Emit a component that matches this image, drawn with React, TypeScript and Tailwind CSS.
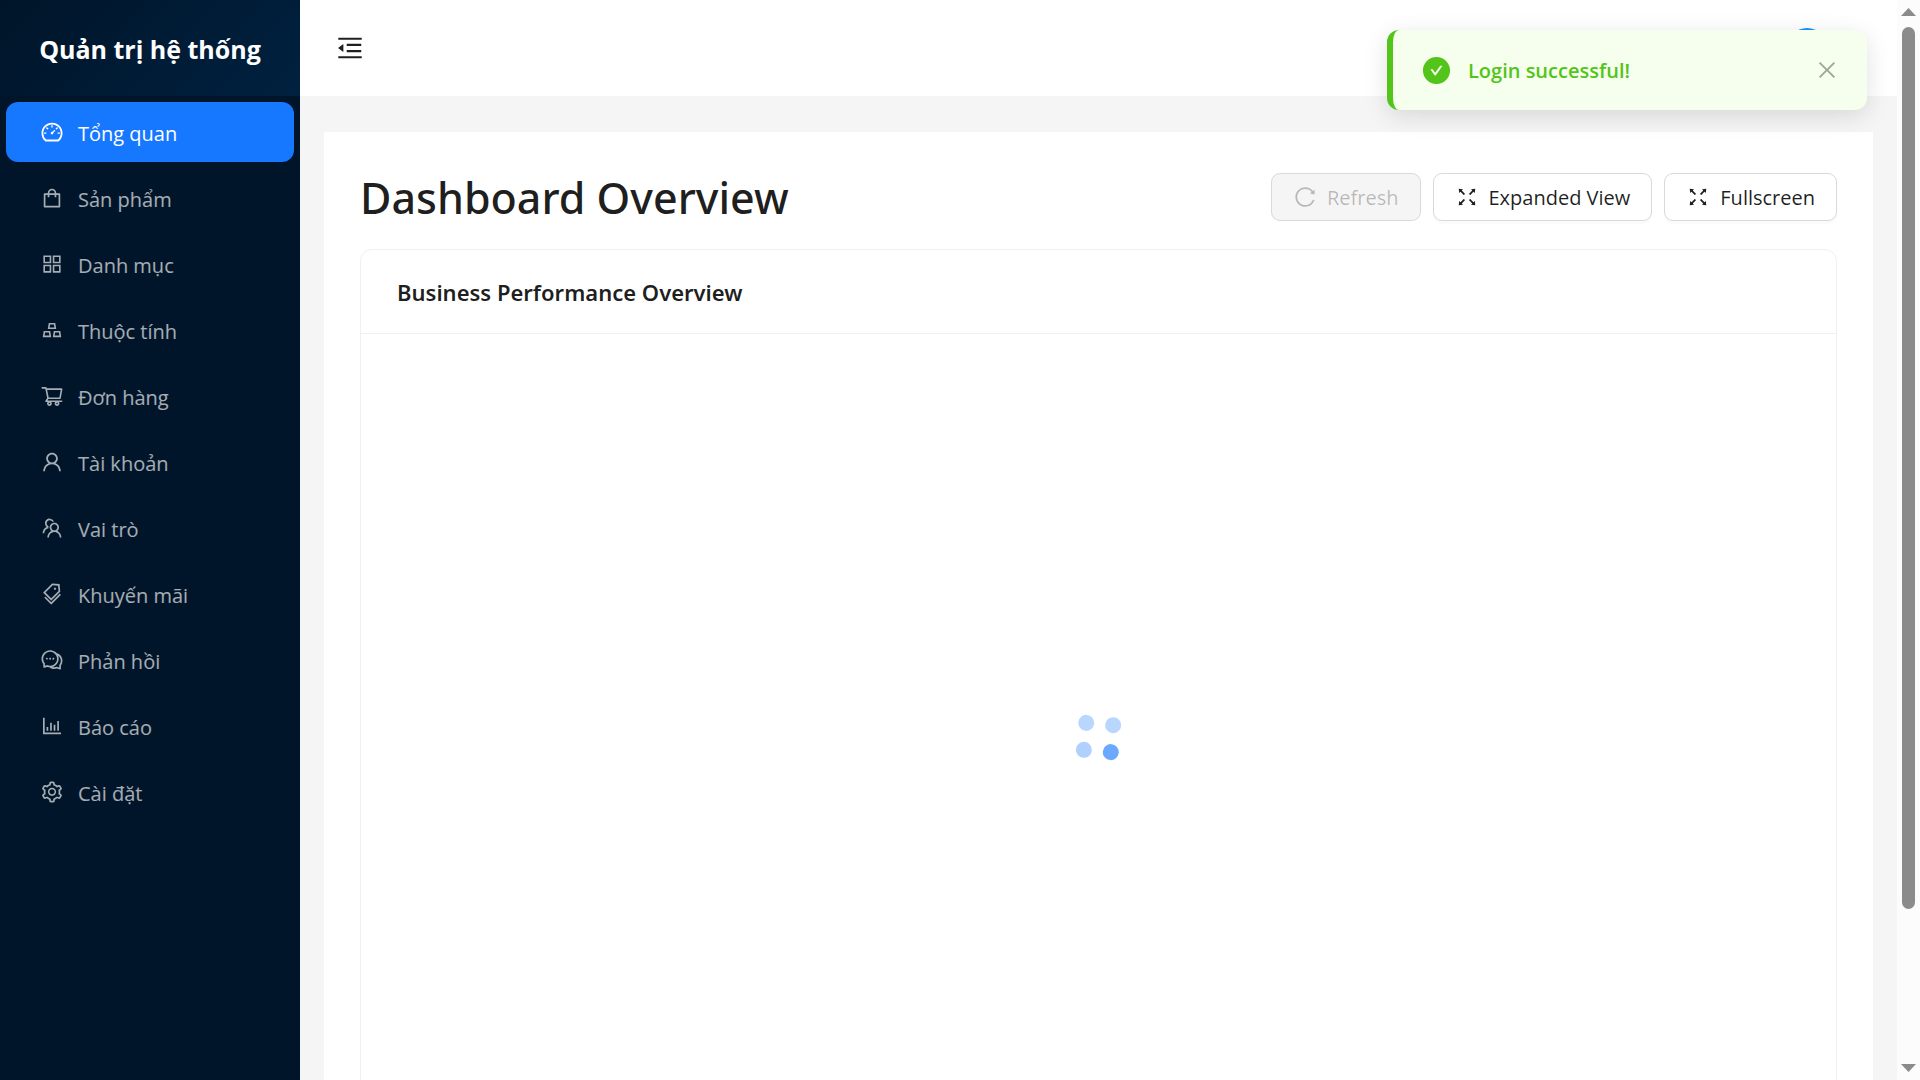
import {
  AiFillCheckCircle,
  AiOutlineAppstore,
  AiOutlineBarChart,
  AiOutlineClose,
  AiOutlineComment,
  AiOutlineDashboard,
  AiOutlineFullscreen,
  AiOutlineGold,
  AiOutlineMenuFold,
  AiOutlineReload,
  AiOutlineSetting,
  AiOutlineShopping,
  AiOutlineShoppingCart,
  AiOutlineTags,
  AiOutlineTeam,
  AiOutlineUser,
} from 'react-icons/ai';
import type { IconType } from 'react-icons';

const menu: { label: string; icon: IconType; active?: boolean }[] = [
  { label: 'Tổng quan', icon: AiOutlineDashboard, active: true },
  { label: 'Sản phẩm', icon: AiOutlineShopping },
  { label: 'Danh mục', icon: AiOutlineAppstore },
  { label: 'Thuộc tính', icon: AiOutlineGold },
  { label: 'Đơn hàng', icon: AiOutlineShoppingCart },
  { label: 'Tài khoản', icon: AiOutlineUser },
  { label: 'Vai trò', icon: AiOutlineTeam },
  { label: 'Khuyến mãi', icon: AiOutlineTags },
  { label: 'Phản hồi', icon: AiOutlineComment },
  { label: 'Báo cáo', icon: AiOutlineBarChart },
  { label: 'Cài đặt', icon: AiOutlineSetting },
];

function Sidebar() {
  return (
    <aside className="flex w-[300px] shrink-0 flex-col bg-[#001529]">
      <div className="flex h-24 items-center justify-center bg-linear-135 from-[#001529] to-[#002140] pt-1 text-[25px] font-bold text-white">
        Quản trị hệ thống
      </div>
      <nav className="flex flex-col gap-1.5 p-1.5" aria-label="Menu">
        {menu.map(({ label, icon: Icon, active }) => (
          <a
            key={label}
            href="#"
            aria-current={active ? 'page' : undefined}
            className={`flex h-15 items-center gap-3.5 rounded-xl px-[34px] text-[20px] ${
              active ? 'bg-[#1677ff] text-white' : 'text-white/65'
            }`}
          >
            <Icon size={24} className="shrink-0" />
            <span className="pt-1">{label}</span>
          </a>
        ))}
      </nav>
    </aside>
  );
}

function ActionButton({ label, icon: Icon, disabled }: { label: string; icon: IconType; disabled?: boolean }) {
  return (
    <button
      type="button"
      disabled={disabled}
      className="flex h-12 items-center gap-2.5 rounded-[9px] border border-[#d9d9d9] bg-white px-[21px] text-[20px] text-black/88 shadow-[0_3px_0_rgba(0,0,0,0.02)] disabled:bg-[#f5f5f5] disabled:text-black/25 disabled:shadow-none"
    >
      <Icon size={24} />
      <span className="pt-0.5">{label}</span>
    </button>
  );
}

function Spinner() {
  return (
    <div role="status" aria-label="Loading" className="grid rotate-5 grid-cols-2 gap-[11px]">
      <span className="size-4 rounded-full bg-[#b9d6ff]" />
      <span className="size-4 rounded-full bg-[#b9d6ff]" />
      <span className="size-4 rounded-full bg-[#b0d0ff]" />
      <span className="size-4 rounded-full bg-[#6ba8ff]" />
    </div>
  );
}

function Toast() {
  return (
    <div
      role="alert"
      className="absolute top-[30px] right-[53px] flex h-20 w-[480px] items-center rounded-xl border-l-6 border-[#52c41a] bg-[#f6ffed] pr-7 pl-7 shadow-[0_6px_24px_rgba(0,0,0,0.12)]"
    >
      <AiFillCheckCircle size={31} className="text-[#52c41a]" />
      <span className="flex-1 pt-0.5 pl-4 text-[20px] font-semibold text-[#52c41a]">Login successful!</span>
      <button type="button" aria-label="Close" className="text-black/35">
        <AiOutlineClose size={24} />
      </button>
    </div>
  );
}

function Scrollbar() {
  return (
    <div aria-hidden="true" className="flex w-[23px] shrink-0 flex-col items-center bg-[#fcfcfc] py-2 text-[#8b8b8b]">
      <svg width="15" height="8" viewBox="0 0 15 8" fill="currentColor">
        <path d="M7.5 0 15 8H0z" />
      </svg>
      <div className="my-[11px] w-full flex-1 px-[5px]">
        <div className="h-[86%] rounded-full bg-[#8b8b8b]" />
      </div>
      <svg width="15" height="8" viewBox="0 0 15 8" fill="currentColor">
        <path d="M7.5 8 15 0H0z" />
      </svg>
    </div>
  );
}

export default function App() {
  return (
    <div className="relative flex h-screen overflow-hidden bg-[#f5f5f5] font-['Open_Sans','Noto_Sans',sans-serif] text-black/88">
      <Sidebar />
      <div className="flex min-w-0 flex-1 flex-col">
        <header className="flex h-24 shrink-0 items-center justify-between bg-white pr-[70px] pl-[35px]">
          <button type="button" aria-label="Collapse menu">
            <AiOutlineMenuFold size={30} />
          </button>
          <div className="size-10 rounded-full bg-[#1890ff]" />
        </header>
        <main className="mx-6 mt-9 flex-1 overflow-hidden bg-white px-9 pt-9">
          <div className="flex items-center justify-between">
            <h1 className="pt-[3px] font-['Noto_Sans',sans-serif] text-[43px] leading-[54px] font-medium">
              Dashboard Overview
            </h1>
            <div className="flex gap-3">
              <ActionButton label="Refresh" icon={AiOutlineReload} disabled />
              <ActionButton label="Expanded View" icon={AiOutlineFullscreen} />
              <ActionButton label="Fullscreen" icon={AiOutlineFullscreen} />
            </div>
          </div>
          <section className="mt-6 rounded-xl border border-[#f0f0f0]">
            <h2 className="flex h-21 items-center border-b border-[#f0f0f0] px-9 pt-0.5 font-['Noto_Sans',sans-serif] text-[22px] font-semibold">
              Business Performance Overview
            </h2>
            <div className="flex h-[806px] items-center justify-center">
              <Spinner />
            </div>
          </section>
        </main>
      </div>
      <Scrollbar />
      <Toast />
    </div>
  );
}
